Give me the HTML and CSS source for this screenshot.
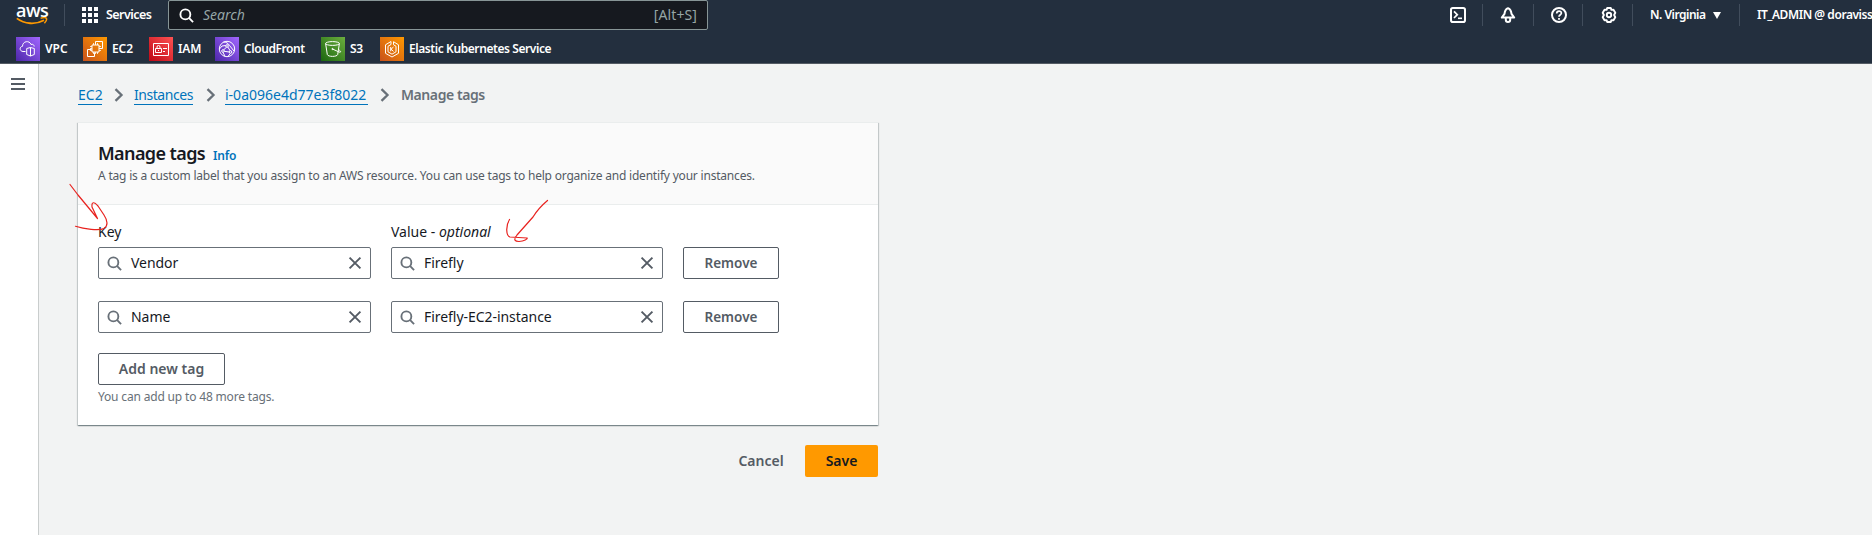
FILE: index.html
```html
<!DOCTYPE html>
<html lang="en">
<head>
<meta charset="utf-8">
<title>Manage tags</title>
<link rel="stylesheet" href="styles.css">
</head>
<body>
<svg class="defs" width="0" height="0" aria-hidden="true">
  <defs>
    <linearGradient id="purple" x1="0" y1="1" x2="1" y2="0"><stop offset="0" stop-color="#4d27aa"/><stop offset="1" stop-color="#a166ff"/></linearGradient>
    <linearGradient id="orange" x1="0" y1="1" x2="1" y2="0"><stop offset="0" stop-color="#c8511b"/><stop offset="1" stop-color="#f90"/></linearGradient>
    <linearGradient id="red" x1="0" y1="1" x2="1" y2="0"><stop offset="0" stop-color="#bd0816"/><stop offset="1" stop-color="#ff5252"/></linearGradient>
    <linearGradient id="green" x1="0" y1="1" x2="1" y2="0"><stop offset="0" stop-color="#1b660f"/><stop offset="1" stop-color="#6cae3e"/></linearGradient>
    <symbol id="search" viewBox="0 0 16 16"><circle cx="6.8" cy="6.8" r="5.3" fill="none" stroke="currentColor" stroke-width="2"/><path d="M10.6 10.6 15 15" stroke="currentColor" stroke-width="2"/></symbol>
    <symbol id="close" viewBox="0 0 16 16"><path d="M1.8 1.8 14.2 14.2M14.2 1.8 1.8 14.2" stroke="currentColor" stroke-width="2.2"/></symbol>
    <symbol id="chevron" viewBox="0 0 10 14"><path d="M1.5 1.2 7.5 7 1.5 12.8" fill="none" stroke="currentColor" stroke-width="2.3"/></symbol>
  </defs>
</svg>

<header class="topbar">
  <div class="nav">
    <div class="logo">
      <span class="logo-text">aws</span>
      <svg class="smile" width="32" height="9" viewBox="0 0 32 9"><path d="M.8 1.4C8.5 7.2 19.5 7.9 28 3.2" fill="none" stroke="#f90" stroke-width="1.8"/><path d="M24.6 1.3C27 .5 29.4.4 30.3 1.2 31 2.2 30 4.6 28.4 6.3" fill="none" stroke="#f90" stroke-width="1.5"/></svg>
    </div>
    <i class="sep"></i>
    <svg class="grid" width="16" height="16" viewBox="0 0 16 16" fill="#fff"><path d="M0 0h4v4H0zM6 0h4v4H6zM12 0h4v4h-4zM0 6h4v4H0zM6 6h4v4H6zM12 6h4v4h-4zM0 12h4v4H0zM6 12h4v4H6zM12 12h4v4h-4z"/></svg>
    <span class="services">Services</span>
    <div class="searchbar">
      <svg class="search-icon" width="15" height="15"><use href="#search"/></svg>
      <span class="placeholder">Search</span>
      <span class="shortcut">[Alt+S]</span>
    </div>
    <div class="tools">
      <div class="tool"><svg width="16" height="16" viewBox="0 0 16 16" fill="none" stroke="#fff" stroke-width="2"><rect x="1" y="1" width="14" height="14" rx="1.8"/><path d="M4 4.3 7.3 7.7 4 11" stroke-width="1.7"/><path d="M8 11.3h4" stroke-width="1.6"/></svg></div>
      <div class="tool bell"><svg width="16" height="16" viewBox="0 0 16 16" fill="none" stroke="#fff" stroke-width="2"><path d="M8 1.2C5.3 2 4.8 4 4.5 6.8L1.8 10.6h12.4L11.5 6.8C11.2 4 10.7 2 8 1.2z" stroke-linejoin="round"/><path d="M5.8 11v1.7a2.2 2.2 0 0 0 4.4 0V11"/></svg></div>
      <div class="tool help"><svg width="16" height="16" viewBox="0 0 16 16" fill="none" stroke="#fff" stroke-width="2"><circle cx="8" cy="8" r="7"/><path d="M5.7 6.6C5.7 3.3 10.5 3.4 10.4 6.3 10.3 7.9 8 7.6 8 9.8" stroke-width="1.7"/><path d="M8 11v1.7" stroke-width="1.8"/></svg></div>
      <div class="tool gear"><svg width="16" height="16" viewBox="0 0 16 16" fill="none" stroke="#fff" stroke-width="1.9"><path d="M6.2 1h3.6l.6 1.9 2.1-.2 1.8 3-1.2 2.3 1.2 2.3-1.8 3-2.1-.2-.6 1.9H6.2l-.6-1.9-2.1.2-1.8-3L2.9 8 1.7 5.7l1.8-3 2.1.2z" stroke-linejoin="round"/><circle cx="8" cy="8" r="2.2"/></svg></div>
      <div class="region"><span class="region-name">N. Virginia</span><svg width="8" height="7" viewBox="0 0 8 7"><path d="M0 0h8L4 7z" fill="#fff"/></svg></div>
      <div class="account">IT_ADMIN @ doraviss</div>
    </div>
  </div>
  <div class="favorites">
    <div class="fav vpc"><svg width="24" height="24" viewBox="0 0 24 24" fill="none" stroke="#fff"><path d="M0 0h24v24H0z" fill="url(#purple)" stroke="none"/><path d="M9.5 14.500H7C3 14 3.500 9.600 6.500 9.300 6.500 4 13.500 3 15 7.500 17 6.700 18 8 18.200 9.500"/><path d="M14.500 10.500 18.300 11.500V17.500L14.500 19 10.700 17.500V11.500zM14.500 10.500v8.500"/></svg><span>VPC</span></div>
    <div class="fav ec2"><svg width="24" height="24" viewBox="0 0 24 24" fill="none" stroke="#fff"><path d="M0 0h24v24H0z" fill="url(#orange)" stroke="none"/><path d="M8.500 12.500h-4v7h7v-4M12.500 7.500v-3h7v7h-3"/><path d="M9 8h7v7H9z"/><path d="M10.500 6v2M12.500 6v2M14.500 6v2M10.500 15v2M12.500 15v2M14.500 15v2M7 9.500h2M7 11.500h2M7 13.500h2M16 9.500h2M16 11.500h2M16 13.500h2" stroke-width=".8"/></svg><span>EC2</span></div>
    <div class="fav iam"><svg width="24" height="24" viewBox="0 0 24 24" fill="none" stroke="#fff"><path d="M0 0h24v24H0z" fill="url(#red)" stroke="none"/><path d="M4.500 6.500h15v12h-15zM6.500 11.500h6v4h-6zM8 11.500V10a1.500 1.500 0 0 1 3 0v1.500M9.500 13v1M14 11.500h4M14 14.500h2"/></svg><span>IAM</span></div>
    <div class="fav cf"><svg width="24" height="24" viewBox="0 0 24 24" fill="none" stroke="#fff"><path d="M0 0h24v24H0z" fill="url(#purple)" stroke="none"/><circle cx="12" cy="12" r="7.700"/><circle cx="12" cy="9" r="1.300"/><circle cx="8" cy="14" r="1.300"/><circle cx="15.500" cy="15" r="1.300"/><path d="M8.500 5C11 5 13 6 14.500 8.500M4.500 12 7 9 10.700 8.500M11.500 10.200 8.500 13M12.800 10 15.200 13.800M9.300 14.300 14.300 15M8 15.300 10 19.300M15.200 16.500 13 19.500M14.500 8.500 19 14"/></svg><span>CloudFront</span></div>
    <div class="fav s3"><svg width="24" height="24" viewBox="0 0 24 24" fill="none" stroke="#fff"><path d="M0 0h24v24H0z" fill="url(#green)" stroke="none"/><ellipse cx="11.500" cy="6.500" rx="6.900" ry="1.900"/><path d="M4.600 6.500 6.300 17.500C7 20 16 20 16.700 17.500L18.400 6.500M11.500 12 18 15C20.500 15.700 20 14 17.700 12.700"/><circle cx="11.500" cy="12" r=".6"/></svg><span>S3</span></div>
    <div class="fav eks"><svg width="24" height="24" viewBox="0 0 24 24" fill="none" stroke="#fff"><path d="M0 0h24v24H0z" fill="url(#orange)" stroke="none"/><path d="M11 4.500 5.500 7.800v8.500L12 20l6.500-3.700V7.800L13.500 4.700v3l2.500 1.600v5.500L12 17.200 8 14.800V9.300L11 7.500z"/><path d="M10.700 10v4.300M13.500 10 11 12.200l2.500 2.200"/></svg><span>Elastic Kubernetes Service</span></div>
  </div>
</header>

<div class="body">
  <aside class="rail"><svg width="14" height="12" viewBox="0 0 14 12"><path d="M0 1h14M0 6h14M0 11h14" stroke="#545b64" stroke-width="2"/></svg></aside>
  <main class="main">
    <nav class="crumbs">
      <a class="c1">EC2</a><svg width="10" height="14"><use href="#chevron"/></svg>
      <a class="c2">Instances</a><svg width="10" height="14"><use href="#chevron"/></svg>
      <a class="c3">i-0a096e4d77e3f8022</a><svg width="10" height="14"><use href="#chevron"/></svg>
      <span class="current">Manage tags</span>
    </nav>
    <section class="card">
      <div class="card-head">
        <div class="title-row"><h1>Manage tags</h1><a class="info">Info</a></div>
        <p class="desc">A tag is a custom label that you assign to an AWS resource. You can use tags to help organize and identify your instances.</p>
      </div>
      <div class="card-body">
        <div class="labels"><label class="key">Key</label><label class="value">Value - <em>optional</em></label></div>
        <div class="row">
          <div class="field"><svg class="lens" width="15" height="15"><use href="#search"/></svg><span>Vendor</span><svg class="x" width="16" height="16"><use href="#close"/></svg></div>
          <div class="field field-value"><svg class="lens" width="15" height="15"><use href="#search"/></svg><span>Firefly</span><svg class="x" width="16" height="16"><use href="#close"/></svg></div>
          <button class="btn remove">Remove</button>
        </div>
        <div class="row">
          <div class="field"><svg class="lens" width="15" height="15"><use href="#search"/></svg><span>Name</span><svg class="x" width="16" height="16"><use href="#close"/></svg></div>
          <div class="field field-value"><svg class="lens" width="15" height="15"><use href="#search"/></svg><span>Firefly-EC2-instance</span><svg class="x" width="16" height="16"><use href="#close"/></svg></div>
          <button class="btn remove">Remove</button>
        </div>
        <button class="btn add">Add new tag</button>
        <p class="hint">You can add up to 48 more tags.</p>
      </div>
    </section>
    <div class="actions"><button class="cancel">Cancel</button><button class="save">Save</button></div>
  </main>
</div>

<svg class="ink" width="500" height="90" viewBox="60 170 500 90" fill="none" stroke="#e8221f" stroke-width="1.2" stroke-linecap="round" stroke-linejoin="round">
  <path d="M70 184.500 78 195 97.500 218.500 92 207C91.500 201.500 94 201.500 98 206L104 215C108 221 108 226 104 228.500 99 231 84 229 75.500 226.300"/>
  <path d="M547.500 200.500C541 206 536 212 533 217L517 235C513 240 515 241.500 519 241.500 524 241 528 239 527 238L510 237C506 236 505.500 226 509.500 219.500"/>
</svg>
</body>
</html>
```

FILE: styles.css
```css
* { box-sizing: border-box; }
body {
  margin: 0;
  height: 535px;
  overflow: hidden;
  background: #f2f3f3;
  color: #16191f;
  font: 14px/20px "Noto Sans", "Open Sans", sans-serif;
  white-space: nowrap;
}
svg { display: block; flex: none; }
p, h1 { margin: 0; }
button { font: inherit; padding: 0; border: 0; background: none; }
.defs, .ink { position: absolute; }
.ink { left: 60px; top: 170px; pointer-events: none; }

/* Top bar */
.topbar { height: 64px; background: #232f3e; border-bottom: 1px solid #545b64; color: #fff; }
.nav { display: flex; height: 30px; align-items: flex-start; }
.logo { width: 48px; padding-left: 16px; }
.logo-text { display: block; height: 16px; font: 600 18px/21px "Open Sans", sans-serif; letter-spacing: -.5px; }
.smile { margin-top: 1px; }
.sep { width: 1px; height: 22px; margin: 4px 17px 0 16px; background: #414d5c; }
.grid { margin-top: 7px; }
.services { width: 62px; margin-left: 8px; font-weight: 600; font-size: 12.500px; line-height: 30px; letter-spacing: -.55px; }
.searchbar { display: flex; align-items: center; width: 540px; height: 30px; padding: 0 10px 0 10px; background: #16191f; border: 1px solid #879596; border-radius: 2px; }
.placeholder { margin-left: 9px; font-style: italic; color: #95a5a6; font-size: 14px; }
.shortcut { margin-left: auto; color: #95a5a6; font-size: 14px; letter-spacing: .1px; }
.tools { display: flex; flex: none; width: 440px; margin-left: auto; font-size: 12px; font-weight: 600; line-height: 30px; letter-spacing: -.5px; }
.tool { flex: none; padding: 7px 16px 0 18px; width: 51px; height: 26px; position: relative; }
.tool::after, .region::after { content: ""; position: absolute; right: 0; top: 4px; width: 1px; height: 22px; background: #414d5c; }
.bell { padding-left: 17px; }
.help { width: 49px; padding-left: 17px; }
.gear { width: 50px; padding-left: 18px; }
.region { display: flex; flex: none; align-items: center; position: relative; width: 107px; height: 30px; padding-left: 17px; }
.region-name { width: 63px; }
.account { padding-left: 17px; letter-spacing: -.45px; }
.favorites { display: flex; padding: 7px 0 0 16px; font-size: 12px; font-weight: 600; line-height: 24px; letter-spacing: -.42px; }
.fav { display: flex; gap: 5px; }
.vpc { width: 67px; letter-spacing: 0; }
.ec2, .iam { width: 66px; letter-spacing: -.1px; }
.cf { width: 106px; }
.s3 { width: 59px; }

/* Page */
.body { display: flex; height: 471px; }
.rail { width: 39px; padding: 14px 0 0 11px; background: #fff; border-right: 1px solid #c9cdcd; }
.main { width: 839px; padding-left: 39px; }
.crumbs { display: flex; height: 58px; padding-top: 21px; }
.crumbs a { color: #0073bb; border-bottom: 1px solid #0073bb; height: 20px; }
.crumbs svg { margin: 3px 10px 0 12px; color: #687078; }
.c1 { width: 24px; }
.c2 { width: 59px; letter-spacing: -.45px; }
.c3 { width: 143px; }
.crumbs .c2 + svg { margin-left: 13px; margin-right: 9px; }
.crumbs .c3 + svg { margin-right: 11px; }
.current { color: #687078; font-weight: 600; letter-spacing: -.42px; }
.card { height: 303px; background: #fff; border-top: 1px solid #eaeded; box-shadow: 0 1px 1px 0 rgba(0, 28, 36, .3), 1px 1px 1px 0 rgba(0, 28, 36, .15), -1px 1px 1px 0 rgba(0, 28, 36, .15); }
.card-head { height: 82px; padding: 18px 20px 0; background: #fafafa; border-bottom: 1px solid #eaeded; }
.title-row { display: flex; align-items: baseline; height: 24px; }
h1 { width: 115px; font-size: 18px; line-height: 24px; font-weight: 600; letter-spacing: -.6px; }
.info { color: #0073bb; font-weight: 600; font-size: 12px; letter-spacing: -.2px; }
.desc { margin-top: 1px; font-size: 12px; color: #545b64; letter-spacing: -.2px; }
.card-body { padding: 17px 20px 0; }
.labels { display: flex; height: 25px; }
.key { width: 293px; }
.row { display: flex; gap: 20px; height: 54px; letter-spacing: -.05px; }
.field { display: flex; align-items: center; width: 273px; height: 32px; padding: 0 8px; border: 1px solid #687078; border-radius: 2px; background: #fff; }
.field-value { width: 272px; }
.lens { color: #687078; margin-right: 9px; }
.x { margin-left: auto; color: #545b64; width: 14px; height: 14px; }
.btn { display: block; height: 32px; border: 1px solid #545b64; border-radius: 2px; color: #545b64; font-weight: 600; }
.remove { width: 96px; font-size: 13.500px; }
.add { width: 127px; margin-top: -2px; }
.hint { margin-top: 2px; font-size: 12px; color: #687078; letter-spacing: -.17px; }
.actions { display: flex; justify-content: flex-end; margin-top: 20px; font-weight: 600; }
.cancel { width: 88px; color: #545b64; }
.save { width: 73px; height: 32px; background: #f90; border-radius: 2px; color: #16191f; }
```
